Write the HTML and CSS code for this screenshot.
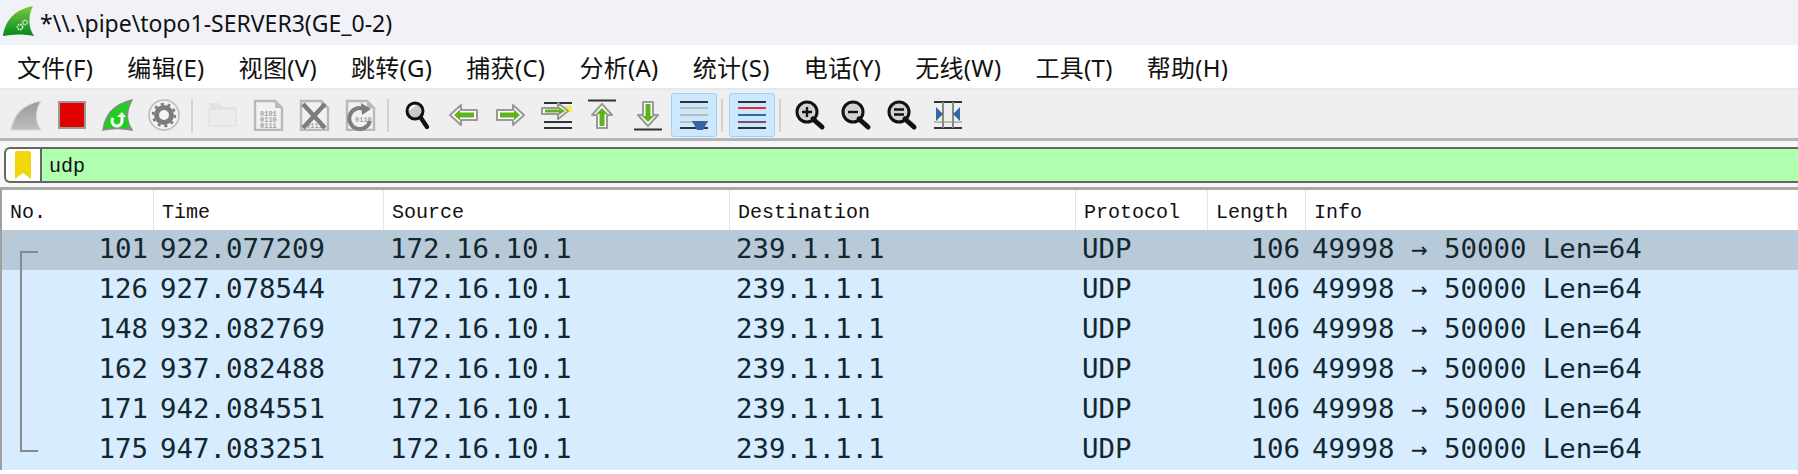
FILE: index.html
```html
<!DOCTYPE html>
<html lang="en">
<head>
  <meta charset="UTF-8" />
  <title>*\\.\pipe\topo1-SERVER3(GE_0-2)</title>
  <link rel="stylesheet" href="styles.css">
</head>
<body>

  <div class="title-bar">
    <svg class="app-logo" viewBox="0 0 32 32">
      <defs>
        <linearGradient id="finGreen" x1="0" y1="0" x2="0" y2="1">
          <stop offset="0" stop-color="#7ccb3c"/>
          <stop offset="0.75" stop-color="#1f9a2a"/>
          <stop offset="1" stop-color="#0c8420"/>
        </linearGradient>
        <linearGradient id="greyFin" x1="0" y1="0" x2="0" y2="1">
          <stop offset="0" stop-color="#9a9a9a"/>
          <stop offset="1" stop-color="#bdbdbd"/>
        </linearGradient>
      </defs>
      <path d="M0 31 C2 18 9 5 30 1 C25 11 25 22 31 31 C20 29 10 29 0 31 Z" fill="url(#finGreen)"/>
      <circle cx="17" cy="22" r="2.6" fill="none" stroke="#dff3d6" stroke-width="1.6" stroke-dasharray="1.6 0.8"/>
      <circle cx="22" cy="17.500" r="2.200" fill="none" stroke="#dff3d6" stroke-width="1.4" stroke-dasharray="1.4 0.7"/>
    </svg>
    <span>*\\.\pipe\topo1-SERVER3(GE_0-2)</span>
  </div>

  <div class="menu-bar">
    <span>文件(F)</span>
    <span>编辑(E)</span>
    <span>视图(V)</span>
    <span>跳转(G)</span>
    <span>捕获(C)</span>
    <span>分析(A)</span>
    <span>统计(S)</span>
    <span>电话(Y)</span>
    <span>无线(W)</span>
    <span>工具(T)</span>
    <span>帮助(H)</span>
  </div>

  <div class="tool-bar">
    <div class="tool"><svg viewBox="0 0 32 32"><path d="M1 31 C3 18 10 6 31 2 C25 12 25 22 31 31 Z" fill="url(#greyFin)" stroke="#d8d8d8" stroke-width="1.2"/></svg></div>
    <div class="tool"><svg viewBox="0 0 32 32"><rect x="3" y="3" width="26" height="26" fill="#e00000" stroke="#999" stroke-width="2"/></svg></div>
    <div class="tool"><svg viewBox="0 0 32 32"><path d="M1 31 C3 18 9 6 30 1 C24 12 24 22 30 31 C20 29 10 29 1 31 Z" fill="#22cc22" stroke="#8a8a8a" stroke-width="1.4"/><path d="M20 18 V22 A5 5 0 1 1 11 19" fill="none" stroke="#fff" stroke-width="3"/><path d="M15 18 L20 13 L24 18 Z" fill="#fff"/></svg></div>
    <div class="tool"><svg viewBox="0 0 32 32"><circle cx="16" cy="16" r="15" fill="#f4f4f4" stroke="#c4c4c4" stroke-width="2"/><circle cx="16" cy="16" r="7.5" fill="none" stroke="#7c7c7c" stroke-width="5"/><circle cx="16" cy="16" r="11" fill="none" stroke="#7c7c7c" stroke-width="2.5" stroke-dasharray="3 3.9"/></svg></div>
    <div class="tool-sep"></div>
    <div class="tool"><svg viewBox="0 0 32 32"><path d="M3 4 H13 L17 8 H30 V27 H3 Z" fill="#e3e3e3"/><path d="M3 10 H30 V27 H3 Z" fill="#ececec" stroke="#dcdcdc" stroke-width="1"/></svg></div>
    <div class="tool">
      <svg viewBox="0 0 32 32"><path d="M3 2 H23 L30 9 V31 H3 Z" fill="#f1f1f1" stroke="#b8b8b8" stroke-width="2.4"/><path d="M23 2 V9 H30 Z" fill="#b8b8b8"/><text class="bits" x="8" y="17">0101</text><text class="bits" x="8" y="23">0110</text><text class="bits" x="8" y="29">0111</text></svg>
    </div>
    <div class="tool">
      <svg viewBox="0 0 32 32"><path d="M3 2 H23 L30 9 V31 H3 Z" fill="#f1f1f1" stroke="#b8b8b8" stroke-width="2.4"/><path d="M23 2 V9 H30 Z" fill="#b8b8b8"/><text class="bits" x="8" y="29">0111</text><path d="M5 5 L27 29 M27 5 L5 29" stroke="#7d7d7d" stroke-width="4.4"/></svg>
    </div>
    <div class="tool">
      <svg viewBox="0 0 32 32"><path d="M3 2 H23 L30 9 V31 H3 Z" fill="#f1f1f1" stroke="#b8b8b8" stroke-width="2.4"/><path d="M23 2 V9 H30 Z" fill="#b8b8b8"/><text class="bits" x="11" y="23">0110</text><path d="M22 11 A10.5 10.5 0 1 0 26 22" fill="none" stroke="#7d7d7d" stroke-width="4"/><path d="M17 4 L27 10 L18 16 Z" fill="#7d7d7d"/></svg>
    </div>
    <div class="tool-sep"></div>
    <div class="tool"><svg viewBox="0 0 32 32"><circle cx="13" cy="12" r="8" fill="#c9c9c9" stroke="#111" stroke-width="3"/><path d="M8 11 A5 5 0 0 1 13 7" fill="none" stroke="#fff" stroke-width="2"/><path d="M19 19 L25 28" stroke="#111" stroke-width="4.400" stroke-linecap="round"/></svg></div>
    <div class="tool"><svg viewBox="0 0 32 32"><path d="M2 16 L13 6 V11 H29 V21 H13 V26 Z" fill="#fff" stroke="#999" stroke-width="2" stroke-linejoin="round"/><path d="M6 16 L12 10.5 V13.5 H26 V18.5 H12 V21.5 Z" fill="#5fb31a"/></svg></div>
    <div class="tool"><svg viewBox="0 0 32 32"><path d="M30 16 L19 6 V11 H3 V21 H19 V26 Z" fill="#fff" stroke="#999" stroke-width="2" stroke-linejoin="round"/><path d="M26 16 L20 10.5 V13.5 H6 V18.5 H20 V21.5 Z" fill="#5fb31a"/></svg></div>
    <div class="tool"><svg viewBox="0 0 32 32"><path d="M4 4 H32 M4 23 H32 M4 29 H32" stroke="#2e3436" stroke-width="2"/><rect x="24" y="7" width="8" height="6" fill="#fce94f"/><path d="M2 9 H18 V4 L28 12 L18 20 V15 H2 Z" fill="#fff" stroke="#999" stroke-width="2" stroke-linejoin="round"/><path d="M5 10.5 H19 V8 L25 12 L19 16 V13.5 H5 Z" fill="#5fb31a"/></svg></div>
    <div class="tool"><svg viewBox="0 0 32 32"><path d="M2 1.5 H30" stroke="#2e3436" stroke-width="2"/><path d="M16 5 L26 16 H21 V29 H11 V16 H6 Z" fill="#fff" stroke="#999" stroke-width="2" stroke-linejoin="round"/><path d="M16 9 L22 15 H18.5 V27 H13.5 V15 H10 Z" fill="#5fb31a"/></svg></div>
    <div class="tool"><svg viewBox="0 0 32 32"><path d="M2 30.5 H30" stroke="#2e3436" stroke-width="2"/><path d="M16 27 L26 16 H21 V3 H11 V16 H6 Z" fill="#fff" stroke="#999" stroke-width="2" stroke-linejoin="round"/><path d="M16 23 L22 17 H18.5 V5 H13.5 V17 H10 Z" fill="#5fb31a"/></svg></div>
    <div class="tool is-on"><svg viewBox="0 0 32 32"><path d="M2 3 H30 M2 29 H30" stroke="#2e3436" stroke-width="2"/><path d="M2 9 H30 M2 16 H30 M2 23 H30" stroke="#babdb6" stroke-width="2"/><path d="M14 22 H30 L25 31 H19 Z" fill="#3465a4"/></svg></div>
    <div class="tool-sep"></div>
    <div class="tool is-on"><svg viewBox="0 0 32 32"><path d="M2 3 H30 M2 29 H30" stroke="#2e3436" stroke-width="2"/><path d="M2 9 H30" stroke="#ef2929" stroke-width="2"/><path d="M2 16 H30" stroke="#3465a4" stroke-width="2"/><path d="M2 23 H30" stroke="#75507b" stroke-width="2"/></svg></div>
    <div class="tool-sep"></div>
    <div class="tool"><svg viewBox="0 0 32 32"><circle cx="13" cy="13" r="10" fill="#d2d2d2" stroke="#111" stroke-width="3"/><path d="M19 20 L28 28" stroke="#111" stroke-width="5" stroke-linecap="round"/><path d="M13 8 V18 M8 13 H18" stroke="#111" stroke-width="2.400"/></svg></div>
    <div class="tool"><svg viewBox="0 0 32 32"><circle cx="13" cy="13" r="10" fill="#d2d2d2" stroke="#111" stroke-width="3"/><path d="M19 20 L28 28" stroke="#111" stroke-width="5" stroke-linecap="round"/><path d="M8 13 H18" stroke="#111" stroke-width="2.400"/></svg></div>
    <div class="tool"><svg viewBox="0 0 32 32"><circle cx="13" cy="13" r="10" fill="#d2d2d2" stroke="#111" stroke-width="3"/><path d="M19 20 L28 28" stroke="#111" stroke-width="5" stroke-linecap="round"/><path d="M8 10.500 H18 M8 15.500 H18" stroke="#111" stroke-width="2.400"/></svg></div>
    <div class="tool"><svg viewBox="0 0 32 32"><path d="M2 3 H30 M2 29 H30" stroke="#2e3436" stroke-width="2"/><path d="M2 23 H30" stroke="#babdb6" stroke-width="2"/><path d="M11 3 V29 M21 3 V29" stroke="#888a85" stroke-width="2"/><path d="M4 8 L11 15 L4 22 Z M28 8 L21 15 L28 22 Z" fill="#3465a4"/></svg></div>
  </div>

  <div class="filter-wrap">
    <div class="filter-box">
      <div class="filter-mark">
        <svg width="16" height="28" viewBox="0 0 16 28"><path d="M0 2 Q0 0 2 0 H14 Q16 0 16 2 V28 L8 22 L0 28 Z" fill="#f2d70c"/></svg>
      </div>
      <div class="filter-text">udp</div>
    </div>
  </div>

  <div class="packet-list">
    <div class="list-head">
      <div class="head-cell">No.</div>
      <div class="head-cell">Time</div>
      <div class="head-cell">Source</div>
      <div class="head-cell">Destination</div>
      <div class="head-cell">Protocol</div>
      <div class="head-cell">Length</div>
      <div class="head-cell">Info</div>
    </div>
    <div class="list-body">
      <div class="packet-row is-current">
        <div class="num">101</div><div>922.077209</div><div>172.16.10.1</div><div>239.1.1.1</div><div>UDP</div><div class="num">106</div><div>49998 → 50000 Len=64</div>
      </div>
      <div class="packet-row">
        <div class="num">126</div><div>927.078544</div><div>172.16.10.1</div><div>239.1.1.1</div><div>UDP</div><div class="num">106</div><div>49998 → 50000 Len=64</div>
      </div>
      <div class="packet-row">
        <div class="num">148</div><div>932.082769</div><div>172.16.10.1</div><div>239.1.1.1</div><div>UDP</div><div class="num">106</div><div>49998 → 50000 Len=64</div>
      </div>
      <div class="packet-row">
        <div class="num">162</div><div>937.082488</div><div>172.16.10.1</div><div>239.1.1.1</div><div>UDP</div><div class="num">106</div><div>49998 → 50000 Len=64</div>
      </div>
      <div class="packet-row">
        <div class="num">171</div><div>942.084551</div><div>172.16.10.1</div><div>239.1.1.1</div><div>UDP</div><div class="num">106</div><div>49998 → 50000 Len=64</div>
      </div>
      <div class="packet-row">
        <div class="num">175</div><div>947.083251</div><div>172.16.10.1</div><div>239.1.1.1</div><div>UDP</div><div class="num">106</div><div>49998 → 50000 Len=64</div>
      </div>
      <div class="related-line"></div>
    </div>
  </div>

</body>
</html>
```

FILE: styles.css
```css
/* Reset & basics */
* {
  box-sizing: border-box;
}
html, body {
  height: 100%;
}
body {
  margin: 0;
  background: white;
  overflow: hidden;
  font-family: 'Noto Sans', sans-serif;
  color: #111;
}

/* Window title */
.title-bar {
  height: 45px;
  background: #f0f2f8;
  display: flex;
  align-items: center;
  padding-left: 3px;
  gap: 5px;
  font-size: 23px;
  white-space: pre;
}
.app-logo {
  width: 32px;
  height: 32px;
  margin-bottom: 3px;
  flex: none;
}

/* Menus */
.menu-bar {
  height: 43px;
  display: flex;
  align-items: center;
  padding-left: 17px;
  gap: 34px;
  font-family: 'Noto Sans', 'Noto Sans CJK SC', sans-serif;
  font-size: 24px;
  letter-spacing: 0.3px;
  white-space: nowrap;
}

/* Icon toolbar */
.tool-bar {
  height: 53px;
  display: flex;
  align-items: center;
  padding: 2px 3px 0;
  background: #efefef;
  border-top: 2px solid #e8e8e8;
  border-bottom: 3px solid #b4b4b4;
}
.tool {
  width: 46px;
  height: 44px;
  display: flex;
  align-items: center;
  justify-content: center;
  flex: none;
}
.tool svg {
  width: 32px;
  height: 32px;
}
.tool.is-on {
  background: #cce8ff;
  border: 1px solid #99d1ff;
  border-radius: 3px;
}
.tool-sep {
  width: 12px;
  height: 33px;
  flex: none;
}
.tool-sep::before {
  content: "";
  display: block;
  width: 2px;
  height: 100%;
  margin-left: 4px;
  background: #d2d2d2;
}
.bits {
  font-family: 'Liberation Mono', monospace;
  font-size: 7px;
  font-weight: bold;
  fill: #a2a2a2;
}

/* Display filter */
.filter-wrap {
  height: 49px;
  padding: 6px 0 0 4px;
  background: #f6f6f6;
  border-bottom: 3px solid #a8a8a8;
}
.filter-box {
  height: 36px;
  display: flex;
  border: 2px solid #666;
  border-right: none;
  border-radius: 6px 0 0 6px;
  background: #afffaf;
}
.filter-mark {
  width: 36px;
  background: white;
  border-right: 2px solid #666;
  border-radius: 5px 0 0 5px;
  display: flex;
  align-items: center;
  justify-content: center;
}
.filter-text {
  padding: 2px 0 0 7px;
  font-family: 'Liberation Mono', monospace;
  font-size: 20px;
  line-height: 32px;
}

/* Packet list */
.packet-list {
  border-left: 2px solid #a0a0a0;
}
.list-head, .packet-row {
  display: grid;
  grid-template-columns: 152px 230px 346px 346px 132px 98px 1fr;
}
.list-head {
  height: 40px;
  font-family: 'Liberation Mono', monospace;
  font-size: 20px;
  line-height: 42px;
  background: white;
}
.head-cell {
  padding: 2px 0 0 8px;
  border-right: 1px solid #e5e5e5;
}
.head-cell:last-child {
  border-right: none;
}
.list-body {
  position: relative;
}
.packet-row {
  height: 40px;
  background: #d8ecff;
  color: #12272e;
  font-family: 'DejaVu Sans Mono', monospace;
  font-size: 27.4px;
  line-height: 38px;
  white-space: pre;
}
.packet-row > div {
  padding-left: 6px;
}
.packet-row > .num {
  padding-left: 0;
  padding-right: 6px;
  text-align: right;
}
.packet-row.is-current {
  background: #b8cad8;
}
.related-line {
  position: absolute;
  left: 18px;
  top: 21px;
  width: 18px;
  height: 201px;
  border: 2px solid #8a8a8a;
  border-right: none;
}
```
